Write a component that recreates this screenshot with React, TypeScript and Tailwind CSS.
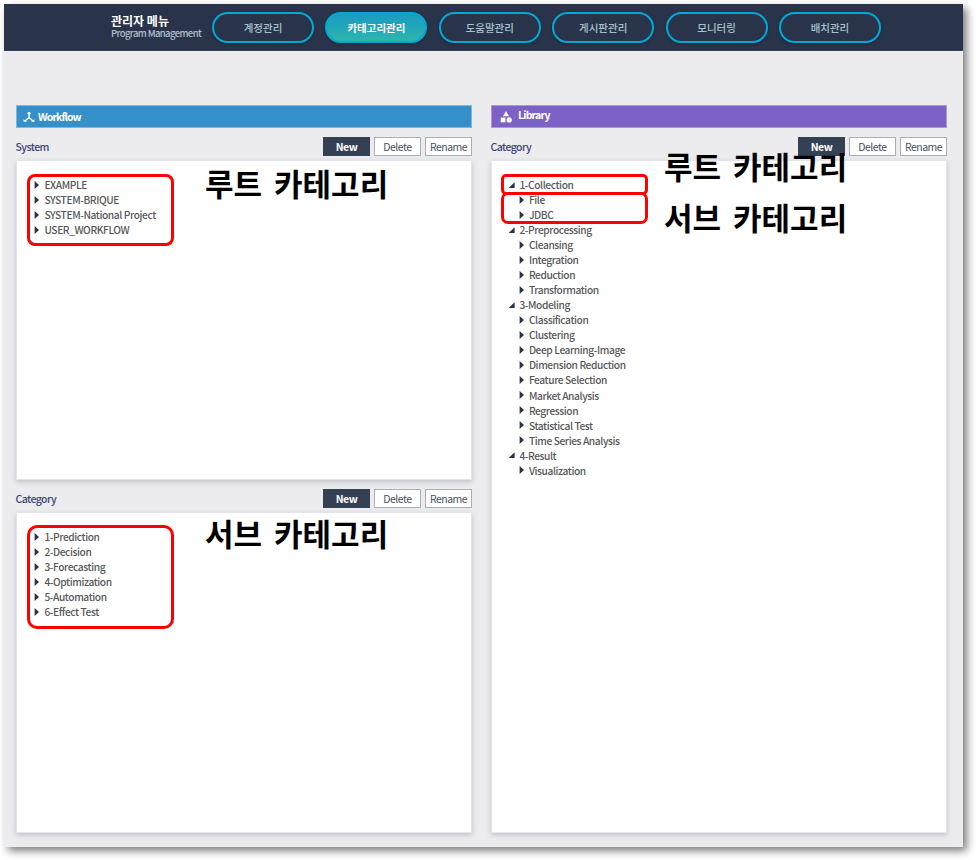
import React from "react";

const MENU = ["계정관리", "카테고리관리", "도움말관리", "게시판관리", "모니터링", "배치관리"];
const SYSTEMS = ["EXAMPLE", "SYSTEM-BRIQUE", "SYSTEM-National Project", "USER_WORKFLOW"];
const CATEGORIES = ["1-Prediction", "2-Decision", "3-Forecasting", "4-Optimization", "5-Automation", "6-Effect Test"];
const LIBRARY: { name: string; items: string[] }[] = [
  { name: "1-Collection", items: ["File", "JDBC"] },
  { name: "2-Preprocessing", items: ["Cleansing", "Integration", "Reduction", "Transformation"] },
  {
    name: "3-Modeling",
    items: [
      "Classification",
      "Clustering",
      "Deep Learning-Image",
      "Dimension Reduction",
      "Feature Selection",
      "Market Analysis",
      "Regression",
      "Statistical Test",
      "Time Series Analysis",
    ],
  },
  { name: "4-Result", items: ["Visualization"] },
];

function Row({ label, open = false, child = false }: { label: string; open?: boolean; child?: boolean }) {
  return (
    <li className={`flex h-[15.04px] items-center whitespace-nowrap ${child ? "pl-[9.5px]" : ""}`}>
      <svg width="6" height="8" viewBox="0 0 6 8" className="mr-[4.4px] shrink-0 overflow-visible" fill="#26334a">
        {open ? <path d="M5.6 1.3V7H-.4Z" /> : <path d="M.6 0L5 4L.6 8Z" />}
      </svg>
      <span>{label}</span>
    </li>
  );
}

function Toolbar({ title }: { title: string }) {
  return (
    <div className="flex h-[19px] items-center">
      <span className="-ml-[0.5px] flex-1 text-[10.5px] font-medium tracking-[-0.55px] text-[#3b4675]">{title}</span>
      <div className="flex gap-1 text-[10.5px] leading-none tracking-[-0.5px]">
        <button className="h-[19px] w-[47px] bg-[#344054] pt-px font-bold text-white">New</button>
        <button className="h-[19px] w-[47px] border border-[#a9aeba] bg-white pt-px text-[#4b5065]">Delete</button>
        <button className="h-[19px] w-[47px] border border-[#a9aeba] bg-white pt-px text-[#4b5065]">Rename</button>
      </div>
    </div>
  );
}

function Tree({ children, className }: { children: React.ReactNode; className: string }) {
  return (
    <ul
      className={`mt-1 border border-[#e3e4ee] bg-white pt-[16.2px] text-[10.2px] font-medium tracking-[-0.4px] text-[#58585a] shadow-[0_2px_5px_rgba(50,55,75,0.22)] ${className}`}
    >
      {children}
    </ul>
  );
}

function Note({ text, className }: { text: string; className: string }) {
  return (
    <div
      className={`absolute whitespace-nowrap text-[31px] font-bold leading-[36px] text-black [word-spacing:5px] ${className}`}
    >
      {text}
    </div>
  );
}

function Outline({ className }: { className: string }) {
  return <div className={`absolute border-[3px] border-[#ff0000] ${className}`} />;
}

export default function App() {
  return (
    <div className="relative h-[860px] w-[976px] overflow-hidden bg-white p-1 font-['Noto_Sans_CJK_KR',sans-serif]">
      <div className="h-[843px] w-[959px] bg-[#ececee] shadow-[4px_4px_8px_rgba(0,0,0,0.5)]">
        <header className="flex h-[47px] items-center border-b border-[#344158] bg-[#29344a] pl-[107px]">
          <div className="w-[101px] whitespace-nowrap">
            <div className="text-[12px] font-bold leading-[12px] text-white">관리자 메뉴</div>
            <div className="pb-px text-[9.5px] font-medium leading-[12px] tracking-[-0.6px] text-[#b5bfd0]">
              Program Management
            </div>
          </div>
          <nav className="flex gap-[11.4px]">
            {MENU.map((m, i) => (
              <button
                key={m}
                className={`h-[31px] w-[102px] rounded-full border-2 pt-[3px] text-[10.5px] leading-none shadow-[0_1px_3px_rgba(0,0,0,0.3)] ${
                  i === 1
                    ? "border-[#07a5d2] bg-linear-to-b from-[#1a9bc2] to-[#2bb5ae] font-bold text-white"
                    : "border-[#00a9d8] font-medium text-[#a5c3ce]"
                }`}
              >
                {m}
              </button>
            ))}
          </nav>
        </header>
        <main className="flex gap-[19px] pl-3 pt-[54px]">
          <section className="w-[456px]">
            <div className="mb-[9px] flex h-[23px] items-center border border-[#7db9de] bg-[#3590c9] pl-1.5 text-[10.5px] font-bold tracking-[-0.9px] text-white">
              <svg width="12" height="12" viewBox="0 0 12 12" className="mr-[3px]" fill="white" stroke="white">
                <circle cx="6" cy="2.2" r="1.5" stroke="none" />
                <path d="M6 2V6.5L2 10M6 6.5L10 10" fill="none" strokeWidth="1.3" />
                <path d="M.5 8.2L4 10.8H.5ZM11.5 8.2L8 10.8H11.5Z" stroke="none" />
              </svg>
              Workflow
            </div>
            <Toolbar title="System" />
            <Tree className="mb-[9px] h-[320px] pl-[17px]">
              {SYSTEMS.map((s) => <Row key={s} label={s} />)}
            </Tree>
            <Toolbar title="Category" />
            <Tree className="h-[321px] pl-[17px]">
              {CATEGORIES.map((s) => <Row key={s} label={s} />)}
            </Tree>
          </section>
          <section className="w-[456px]">
            <div className="mb-[9px] flex h-[23px] items-center border border-[#aa99d8] bg-[#7c62c4] pl-[8px] text-[10.5px] font-bold tracking-[-0.8px] text-white">
              <svg width="12" height="12" viewBox="0 0 12 12" className="mr-[6px] mt-px" fill="white">
                <path d="M6 0L9 5.2H3Z" />
                <path d="M.7 6.5H5.4V11.3H.7Z" />
                <circle cx="9.2" cy="8.9" r="2.6" />
              </svg>
              <span className="-mt-1">Library</span>
            </div>
            <Toolbar title="Category" />
            <Tree className="h-[673px] pl-[17px]">
              {LIBRARY.map((g) => (
                <React.Fragment key={g.name}>
                  <Row label={g.name} open />
                  {g.items.map((s) => <Row key={s} label={s} child />)}
                </React.Fragment>
              ))}
            </Tree>
          </section>
        </main>
      </div>
      <Outline className="left-[27px] top-[174px] h-[72px] w-[147px] rounded-[8px]" />
      <Outline className="left-[27px] top-[525px] h-[104px] w-[147px] rounded-[10px]" />
      <Outline className="left-[501px] top-[174px] h-[21px] w-[147px] rounded-[5px]" />
      <Outline className="left-[501px] top-[192px] h-[32px] w-[147px] rounded-[7px]" />
      <Note text="루트 카테고리" className="left-[205px] top-[165px]" />
      <Note text="루트 카테고리" className="left-[664px] top-[148px]" />
      <Note text="서브 카테고리" className="left-[664px] top-[199px]" />
      <Note text="서브 카테고리" className="left-[205px] top-[515px]" />
    </div>
  );
}
